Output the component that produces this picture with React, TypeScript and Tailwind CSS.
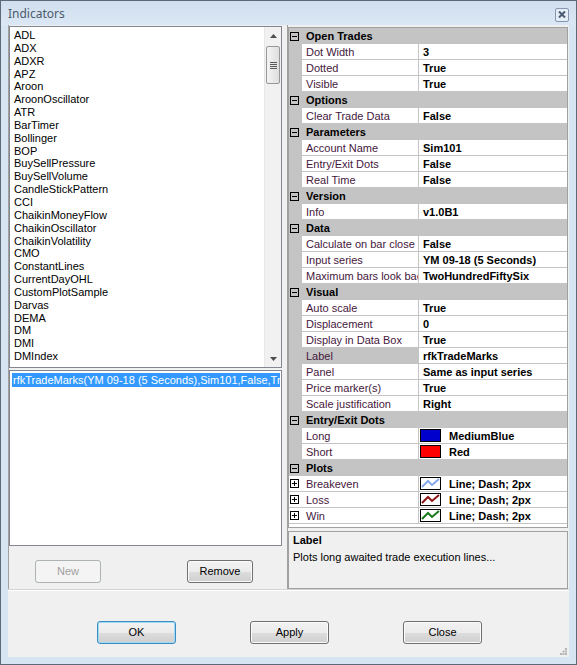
import React from 'react';

const indicators = [
  'ADL', 'ADX', 'ADXR', 'APZ', 'Aroon', 'AroonOscillator', 'ATR', 'BarTimer', 'Bollinger', 'BOP',
  'BuySellPressure', 'BuySellVolume', 'CandleStickPattern', 'CCI', 'ChaikinMoneyFlow',
  'ChaikinOscillator', 'ChaikinVolatility', 'CMO', 'ConstantLines', 'CurrentDayOHL',
  'CustomPlotSample', 'Darvas', 'DEMA', 'DM', 'DMI', 'DMIndex',
];

type Row =
  | { cat: string }
  | { name: string; value: string; swatch?: string; plot?: string; sub?: boolean; selected?: boolean };

const rows: Row[] = [
  { cat: 'Open Trades' },
  { name: 'Dot Width', value: '3' },
  { name: 'Dotted', value: 'True' },
  { name: 'Visible', value: 'True' },
  { cat: 'Options' },
  { name: 'Clear Trade Data', value: 'False' },
  { cat: 'Parameters' },
  { name: 'Account Name', value: 'Sim101' },
  { name: 'Entry/Exit Dots', value: 'False' },
  { name: 'Real Time', value: 'False' },
  { cat: 'Version' },
  { name: 'Info', value: 'v1.0B1' },
  { cat: 'Data' },
  { name: 'Calculate on bar close', value: 'False' },
  { name: 'Input series', value: 'YM 09-18 (5 Seconds)' },
  { name: 'Maximum bars look back', value: 'TwoHundredFiftySix' },
  { cat: 'Visual' },
  { name: 'Auto scale', value: 'True' },
  { name: 'Displacement', value: '0' },
  { name: 'Display in Data Box', value: 'True' },
  { name: 'Label', value: 'rfkTradeMarks', selected: true },
  { name: 'Panel', value: 'Same as input series' },
  { name: 'Price marker(s)', value: 'True' },
  { name: 'Scale justification', value: 'Right' },
  { cat: 'Entry/Exit Dots' },
  { name: 'Long', value: 'MediumBlue', swatch: '#0000cd' },
  { name: 'Short', value: 'Red', swatch: '#ff0000' },
  { cat: 'Plots' },
  { name: 'Breakeven', value: 'Line; Dash; 2px', plot: '#85a9ec', sub: true },
  { name: 'Loss', value: 'Line; Dash; 2px', plot: '#8b1414', sub: true },
  { name: 'Win', value: 'Line; Dash; 2px', plot: '#16791a', sub: true },
];

function Toggle({ plus }: { plus?: boolean }) {
  return (
    <span className="relative block w-[9px] h-[9px] border border-black">
      <span className="absolute left-[1px] right-[1px] top-[3px] h-[1px] bg-black" />
      {plus && <span className="absolute top-[1px] bottom-[1px] left-[3px] w-[1px] bg-black" />}
    </span>
  );
}

function Arrow({ down }: { down?: boolean }) {
  return (
    <div className="h-[17px] flex items-center justify-center">
      <svg width="7" height="4" viewBox="0 0 7 4">
        {down ? <polygon points="0,0 7,0 3.5,4" fill="#4d4d4d" /> : <polygon points="3.5,0 7,4 0,4" fill="#4d4d4d" />}
      </svg>
    </div>
  );
}

function WinButton({
  children,
  className = '',
  primary,
  disabled,
}: {
  children: React.ReactNode;
  className?: string;
  primary?: boolean;
  disabled?: boolean;
}) {
  if (disabled) {
    return (
      <div className={`h-[23px] flex items-center justify-center rounded-[3px] border border-[#adb2b5] bg-[#f4f4f4] text-[#a0a0a0] ${className}`}>
        {children}
      </div>
    );
  }
  return (
    <div
      className={`h-[23px] flex items-center justify-center rounded-[3px] border bg-[linear-gradient(to_bottom,#f2f2f2_0%,#ebebeb_50%,#dddddd_50%,#cfcfcf_100%)] text-black ${
        primary ? 'border-[#3c8cc4] shadow-[inset_0_0_0_1px_#9edbf7]' : 'border-[#707070] shadow-[inset_0_0_0_1px_#fbfbfb]'
      } ${className}`}
    >
      {children}
    </div>
  );
}

function PlotIcon({ color }: { color: string }) {
  return (
    <svg width="21" height="13" viewBox="0 0 21 13" className="block">
      <rect x="0.5" y="0.5" width="20" height="12" fill="#fff" stroke="#000" />
      <polyline points="2,10 8,4 12,8 19,2" fill="none" stroke={color} strokeWidth="2" />
    </svg>
  );
}

function GridRow({ row }: { row: Row }) {
  if ('cat' in row) {
    return (
      <div className="h-[16px] flex items-center bg-[#c4c4c4]">
        <div className="w-[13px] h-full flex items-center pl-[1px]">
          <Toggle />
        </div>
        <span className="pl-[4px] pt-[1px] font-bold">{row.cat}</span>
      </div>
    );
  }
  return (
    <div className="h-[16px] flex border-b border-[#c4c4c4]">
      <div className={`w-[13px] h-full flex items-center pl-[1px] ${row.sub ? 'bg-white' : 'bg-[#c4c4c4]'}`}>
        {row.sub && <Toggle plus />}
      </div>
      <div
        className={`w-[117px] h-full flex items-center pl-[4px] pt-[1px] whitespace-nowrap overflow-hidden text-[#45183c] border-r border-[#c4c4c4] ${
          row.selected ? 'bg-[#c4c4c4]' : 'bg-white'
        }`}
      >
        {row.name}
      </div>
      <div className="flex-1 h-full flex items-center bg-white font-bold whitespace-nowrap overflow-hidden">
        {row.swatch ? (
          <>
            <span className="ml-[1px] w-[21px] h-[13px] border border-black" style={{ backgroundColor: row.swatch }} />
            <span className="ml-[8px] pt-[1px]">{row.value}</span>
          </>
        ) : row.plot ? (
          <>
            <span className="ml-[1px]">
              <PlotIcon color={row.plot} />
            </span>
            <span className="ml-[8px] pt-[1px]">{row.value}</span>
          </>
        ) : (
          <span className="pl-[4px] pt-[1px]">{row.value}</span>
        )}
      </div>
    </div>
  );
}

export default function App() {
  return (
    <div className="w-[577px] h-[665px] flex flex-col border border-[#5d6975] bg-[#d7e4f2] font-['Liberation_Sans',Arial,sans-serif] text-[11px] leading-[13px] text-black">
      {/* title bar */}
      <div className="h-[24px] flex items-center pl-[7px] pr-[7px] bg-[linear-gradient(to_bottom,#d0deee,#dbe7f4)]">
        <span className="font-['Noto_Sans',sans-serif] text-[12px] text-[#4a5a6b] pt-[1px]">Indicators</span>
        <div className="ml-auto mt-[3px] w-[14px] h-[14px] rounded-[2px] border border-[#8797b0] bg-[#e4ecf6] flex items-center justify-center">
          <svg width="8" height="7" viewBox="0 0 8 7">
            <path d="M1 0.5 L7 6.5 M7 0.5 L1 6.5" stroke="#4b5a70" strokeWidth="2" />
          </svg>
        </div>
      </div>

      {/* client area */}
      <div className="flex-1 mx-[7px] mb-[7px] bg-[#f0f0f0] flex flex-col">
        <div className="h-[565px] flex border-b border-[#d2d2d2]">
          {/* left panel */}
          <div className="w-[280px] flex flex-col border-l border-r border-[#a0a0a0]">
            <div className="mt-[1px] h-[342px] w-[273px] border border-[#828790] bg-white flex">
              <div className="flex-1 overflow-hidden pt-[2px] pl-[4px]">
                {indicators.map((name) => (
                  <div key={name} className="h-[12.85px] leading-[13px] whitespace-nowrap">
                    {name}
                  </div>
                ))}
              </div>
              <div className="w-[17px] flex flex-col bg-[#f1f1f1] border-l border-[#e7e7e7]">
                <Arrow />
                <div className="mx-[1px] mt-[2px] h-[38px] rounded-[2px] border border-[#979797] bg-[linear-gradient(to_right,#f4f4f4,#dedede)] flex flex-col items-center justify-center gap-[1px]">
                  <span className="w-[7px] h-[1px] bg-[#5a5a5a]" />
                  <span className="w-[7px] h-[1px] bg-[#5a5a5a]" />
                  <span className="w-[7px] h-[1px] bg-[#5a5a5a]" />
                  <span className="w-[7px] h-[1px] bg-[#5a5a5a]" />
                </div>
                <div className="flex-1" />
                <Arrow down />
              </div>
            </div>
            <div className="mt-[2px] h-[176px] w-[273px] border border-[#828790] bg-white">
              <div className="mt-[2px] ml-[2px] mr-[1px] h-[14px] bg-[#3399ff] text-white pl-[1px] leading-[14px] whitespace-nowrap overflow-hidden">
                rfkTradeMarks(YM 09-18 (5 Seconds),Sim101,False,True)
              </div>
            </div>
            <div className="mt-[14px] flex pl-[26px] gap-[86px]">
              <WinButton disabled className="w-[66px]">New</WinButton>
              <WinButton className="w-[66px]">Remove</WinButton>
            </div>
          </div>

          {/* right panel */}
          <div className="flex-1 flex flex-col pt-[2px] pr-[1px]">
            <div className="h-[501px] border border-[#a0a0a0] bg-white overflow-hidden">
              {rows.map((row, i) => (
                <GridRow key={i} row={row} />
              ))}
            </div>
            <div className="mt-[3px] h-[58px] border border-[#a0a0a0] bg-[#f0f0f0] px-[4px] pt-[2px]">
              <div className="font-bold">Label</div>
              <div className="mt-[4px]">Plots long awaited trade execution lines...</div>
            </div>
          </div>
        </div>

        {/* bottom buttons */}
        <div className="relative flex-1 border-t border-white flex items-start pt-[30px] pl-[89px] gap-[74px]">
          <WinButton primary className="w-[79px]">OK</WinButton>
          <WinButton className="w-[79px]">Apply</WinButton>
          <WinButton className="w-[79px]">Close</WinButton>
          <svg width="7" height="7" viewBox="0 0 7 7" className="absolute right-[2px] bottom-[2px]">
            <rect x="5" y="0" width="2" height="2" fill="#b5b5b5" />
            <rect x="2.5" y="2.5" width="2" height="2" fill="#b5b5b5" />
            <rect x="5" y="2.5" width="2" height="2" fill="#b5b5b5" />
            <rect x="0" y="5" width="2" height="2" fill="#b5b5b5" />
            <rect x="2.5" y="5" width="2" height="2" fill="#b5b5b5" />
            <rect x="5" y="5" width="2" height="2" fill="#b5b5b5" />
          </svg>
        </div>
      </div>
    </div>
  );
}
